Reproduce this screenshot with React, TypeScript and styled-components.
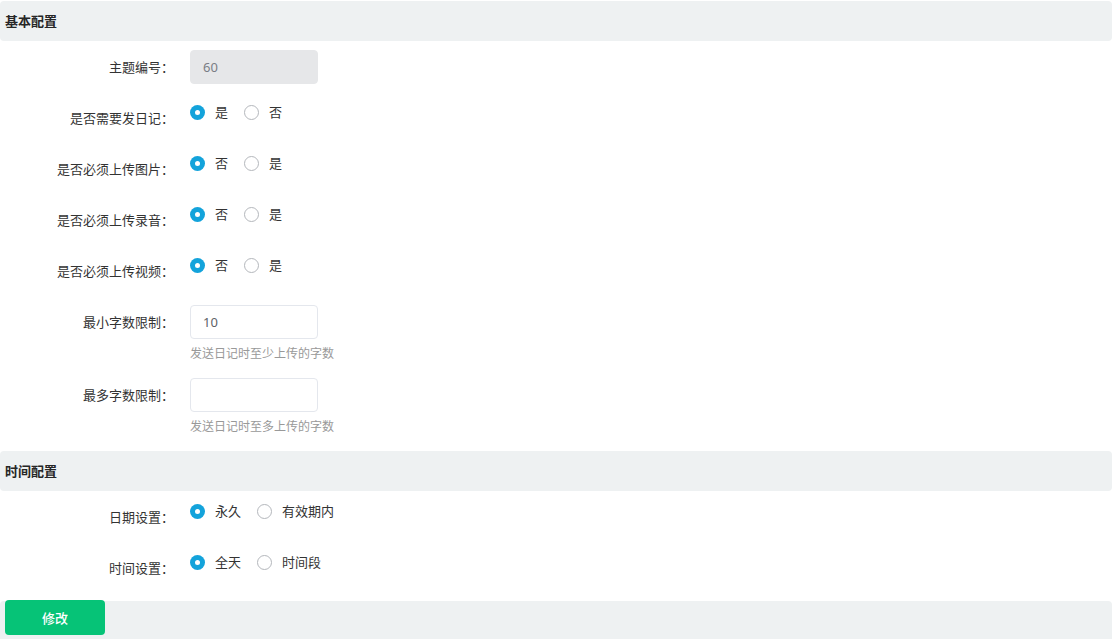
import React, { useState } from "react";
import styled, { createGlobalStyle } from "styled-components";

const GlobalStyle = createGlobalStyle`
  body {
    margin: 0;
    background: #fff;
    font-family: "Noto Sans CJK SC", "Noto Sans", sans-serif;
    color: #303133;
  }
`;

const Page = styled.div`
  width: 1112px;
  padding-top: 1px;
`;

const SectionHeader = styled.div`
  height: 40px;
  line-height: 40px;
  padding-left: 5px;
  background-color: #eef1f2;
  border-radius: 4px;
  font-size: 13px;
  font-weight: bold;
  color: #262626;
`;

const FormItem = styled.div<{ mt: number; mb: number }>`
  display: flex;
  margin-top: ${({ mt }) => mt}px;
  margin-bottom: ${({ mb }) => mb}px;
`;

const Label = styled.label<{ h: number }>`
  width: 190px;
  flex-shrink: 0;
  text-align: right;
  padding-right: 16px;
  box-sizing: border-box;
  font-size: 13px;
  line-height: ${({ h }) => h}px;
  color: #333;
`;

const Control = styled.div<{ pt?: number }>`
  display: flex;
  flex-direction: column;
  padding-top: ${({ pt }) => pt || 0}px;
`;

const TextInput = styled.input<{ disabled?: boolean }>`
  width: 128px;
  height: 34px;
  box-sizing: border-box;
  border: 1px solid ${({ disabled }) => (disabled ? "#e6e7e9" : "#e4e7ed")};
  border-radius: 4px;
  background-color: ${({ disabled }) => (disabled ? "#e6e7e9" : "#fff")};
  padding: 0 12px;
  font-family: "Noto Sans", "Noto Sans CJK SC", sans-serif;
  font-size: 13px;
  color: ${({ disabled }) => (disabled ? "#7a7d85" : "#606266")};
  outline: none;
`;

const Help = styled.div`
  margin-top: 5px;
  font-size: 12px;
  line-height: 17px;
  color: #999;
`;

const RadioGroup = styled.div`
  display: flex;
  align-items: center;
  height: 14px;
`;

const RadioOption = styled.label`
  display: flex;
  align-items: center;
  margin-right: 16px;
  cursor: pointer;
  font-size: 13px;
  color: #333;
  line-height: 14px;
`;

const Circle = styled.span<{ checked: boolean }>`
  width: 15px;
  height: 15px;
  box-sizing: border-box;
  border-radius: 50%;
  margin-right: 10px;
  position: relative;
  border: ${({ checked }) => (checked ? "none" : "1px solid #b4b7bc")};
  background-color: ${({ checked }) => (checked ? "#13a3db" : "#fff")};
  &::after {
    content: "";
    display: ${({ checked }) => (checked ? "block" : "none")};
    position: absolute;
    left: 5px;
    top: 5px;
    width: 5px;
    height: 5px;
    border-radius: 50%;
    background: #fff;
  }
`;

const Footer = styled.div`
  margin-top: 13px;
  height: 38px;
  background-color: #eef1f2;
  border-radius: 4px 4px 0 0;
  padding-left: 5px;
`;

const SubmitButton = styled.button`
  width: 100px;
  height: 35px;
  margin-top: -1px;
  border: none;
  border-radius: 4px;
  background-color: #06c377;
  color: #fff;
  font-family: "Noto Sans CJK SC", sans-serif;
  font-size: 13px;
  font-weight: 500;
  cursor: pointer;
`;

interface RadioProps {
  options: string[];
  value: string;
  onChange: (v: string) => void;
}

const Radios: React.FC<RadioProps> = ({ options, value, onChange }) => (
  <RadioGroup>
    {options.map((o) => (
      <RadioOption key={o} onClick={() => onChange(o)}>
        <Circle checked={value === o} />
        {o}
      </RadioOption>
    ))}
  </RadioGroup>
);

const App: React.FC = () => {
  const [diary, setDiary] = useState("是");
  const [pic, setPic] = useState("否");
  const [audio, setAudio] = useState("否");
  const [video, setVideo] = useState("否");
  const [dateSet, setDateSet] = useState("永久");
  const [timeSet, setTimeSet] = useState("全天");
  const [minLen, setMinLen] = useState("10");
  const [maxLen, setMaxLen] = useState("");

  return (
    <Page>
      <GlobalStyle />
      <SectionHeader>基本配置</SectionHeader>

      <FormItem mt={9} mb={14}>
        <Label h={34}>主题编号：</Label>
        <Control>
          <TextInput disabled value="60" readOnly />
        </Control>
      </FormItem>

      <FormItem mt={0} mb={11}>
        <Label h={40}>是否需要发日记：</Label>
        <Control pt={7}>
          <Radios options={["是", "否"]} value={diary} onChange={setDiary} />
        </Control>
      </FormItem>

      <FormItem mt={0} mb={11}>
        <Label h={40}>是否必须上传图片：</Label>
        <Control pt={7}>
          <Radios options={["否", "是"]} value={pic} onChange={setPic} />
        </Control>
      </FormItem>

      <FormItem mt={0} mb={11}>
        <Label h={40}>是否必须上传录音：</Label>
        <Control pt={7}>
          <Radios options={["否", "是"]} value={audio} onChange={setAudio} />
        </Control>
      </FormItem>

      <FormItem mt={0} mb={14}>
        <Label h={40}>是否必须上传视频：</Label>
        <Control pt={7}>
          <Radios options={["否", "是"]} value={video} onChange={setVideo} />
        </Control>
      </FormItem>

      <FormItem mt={0} mb={17}>
        <Label h={34}>最小字数限制：</Label>
        <Control>
          <TextInput value={minLen} onChange={(e) => setMinLen(e.target.value)} />
          <Help>发送日记时至少上传的字数</Help>
        </Control>
      </FormItem>

      <FormItem mt={0} mb={17}>
        <Label h={34}>最多字数限制：</Label>
        <Control>
          <TextInput value={maxLen} onChange={(e) => setMaxLen(e.target.value)} />
          <Help>发送日记时至多上传的字数</Help>
        </Control>
      </FormItem>

      <SectionHeader>时间配置</SectionHeader>

      <FormItem mt={6} mb={11}>
        <Label h={40}>日期设置：</Label>
        <Control pt={7}>
          <Radios options={["永久", "有效期内"]} value={dateSet} onChange={setDateSet} />
        </Control>
      </FormItem>

      <FormItem mt={0} mb={0}>
        <Label h={40}>时间设置：</Label>
        <Control pt={7}>
          <Radios options={["全天", "时间段"]} value={timeSet} onChange={setTimeSet} />
        </Control>
      </FormItem>

      <Footer>
        <SubmitButton>修改</SubmitButton>
      </Footer>
    </Page>
  );
};

export default App;
